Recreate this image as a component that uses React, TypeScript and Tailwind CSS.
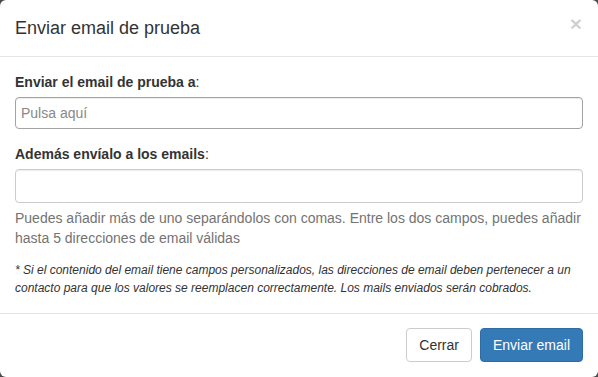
export default function App() {
  return (
    <div className="min-h-[377px] bg-[#4a4a4a]" style={{ fontFamily: '"Liberation Sans", Arial, sans-serif' }}>
      <div className="w-[598px] h-[377px] bg-white rounded-[6px] text-[14px] leading-[20px] text-[#333]">
        <div className="h-[57px] px-[15px] flex items-center justify-between border-b border-[#e5e5e5]">
          <h4 className="text-[18px] leading-[26px] font-normal">Enviar email de prueba</h4>
          <button className="text-[21px] font-bold leading-none text-black/20 -mt-[10px] mr-[1px]">×</button>
        </div>
        <div className="p-[15px] pb-[15px] h-[256px]">
          <div className="mb-[15px]">
            <label className="block mb-[5px]">
              <span className="font-bold">Enviar el email de prueba a</span>:
            </label>
            <input
              placeholder="Pulsa aquí"
              className="block w-full h-[32px] px-[5px] rounded-[4px] border border-[#a3a3a3] text-[14px] placeholder:text-[#888] outline-none shadow-[inset_0_1px_1px_rgba(0,0,0,0.075)]"
            />
          </div>
          <div>
            <label className="block mb-[5px]">
              <span className="font-bold">Además envíalo a los emails</span>:
            </label>
            <input className="block w-full h-[34px] px-[12px] rounded-[4px] border border-[#ccc] outline-none shadow-[inset_0_1px_1px_rgba(0,0,0,0.075)]" />
            <p className="mt-[5px] text-[#737373]">
              Puedes añadir más de uno separándolos con comas. Entre los dos campos, puedes añadir hasta 5 direcciones de email válidas
            </p>
          </div>
          <p className="mt-[13px] text-[12px] leading-[18px] italic text-[#333]">
            * Si el contenido del email tiene campos personalizados, las direcciones de email deben pertenecer a un contacto para que los valores se reemplacen correctamente. Los mails enviados serán cobrados.
          </p>
        </div>
        <div className="border-t border-[#e5e5e5] px-[15px] pt-[14px] flex justify-end gap-[8px]">
          <button className="h-[34px] px-[12px] rounded-[4px] border border-[#ccc] bg-white text-[#333]">Cerrar</button>
          <button className="h-[34px] px-[12px] rounded-[4px] border border-[#2e6da4] bg-[#337ab7] text-white">Enviar email</button>
        </div>
      </div>
    </div>
  );
}
